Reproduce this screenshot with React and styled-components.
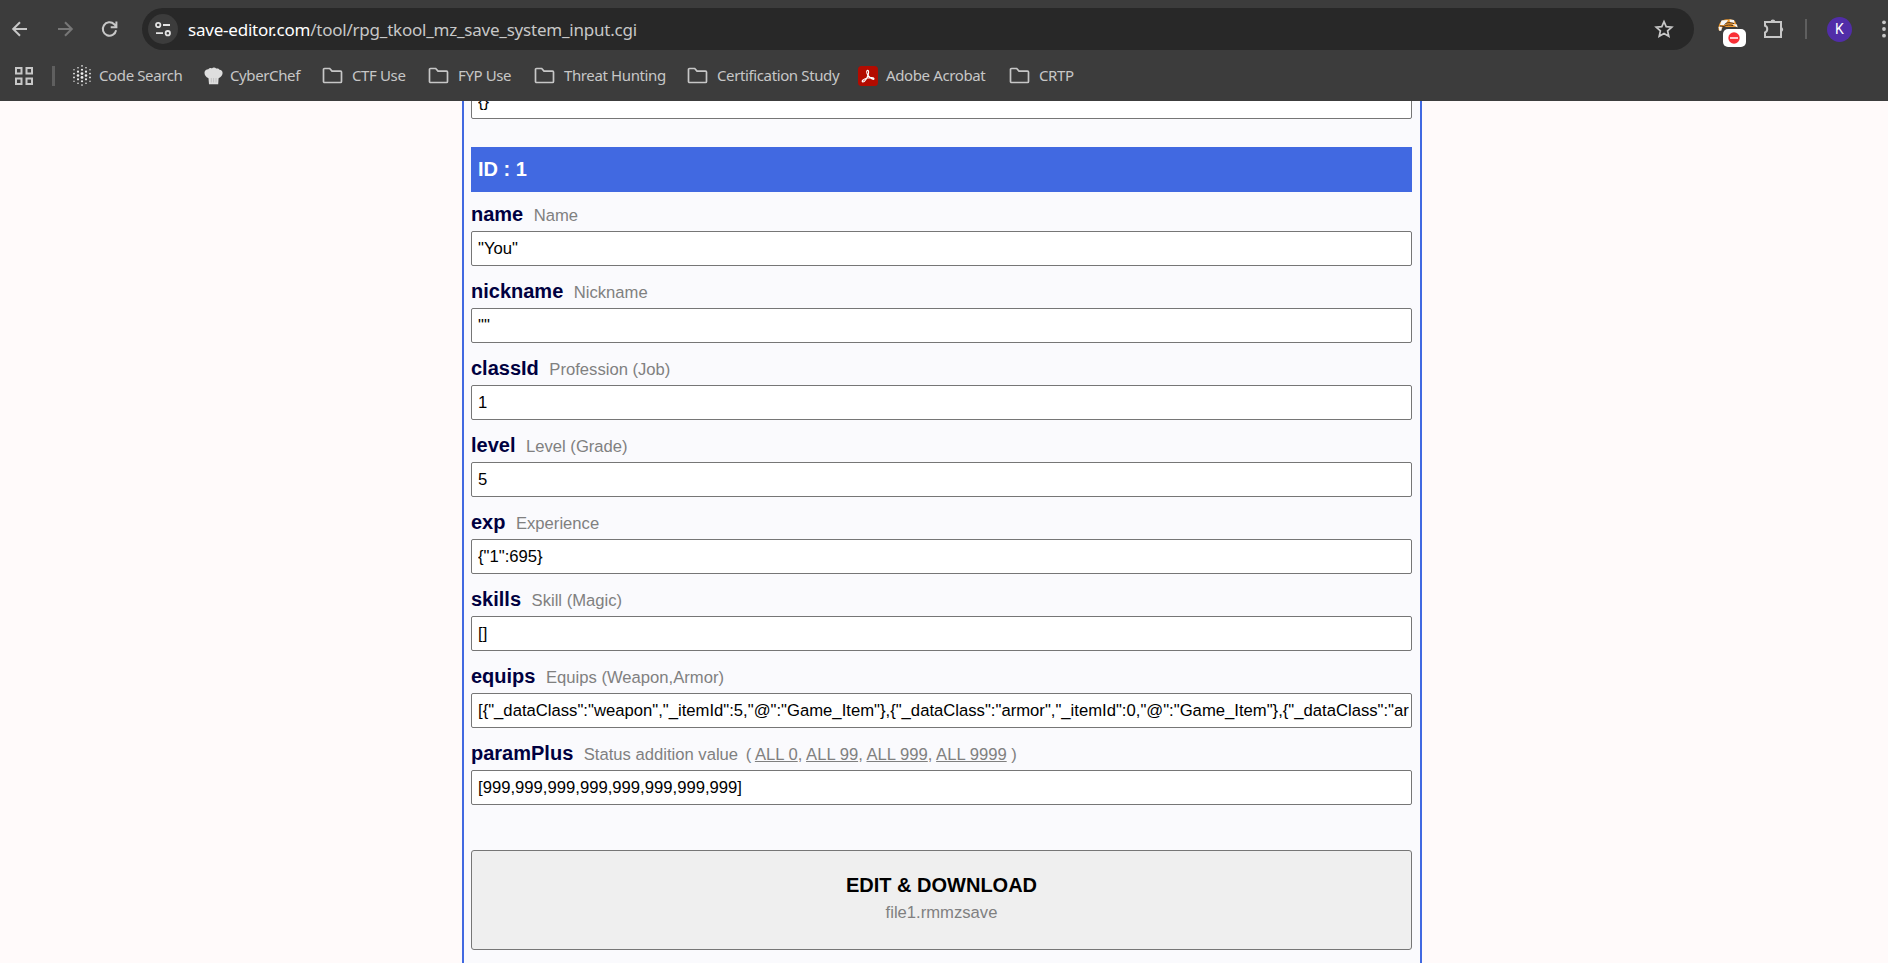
import React from "react";
import styled, { createGlobalStyle } from "styled-components";

const GlobalStyle = createGlobalStyle`
  * { box-sizing: border-box; }
  html, body { margin: 0; padding: 0; overflow: hidden; }
  body { background: #fffafa; font-family: "Liberation Sans", Arial, sans-serif; }
`;

const Window = styled.div`
  display: flex;
  flex-direction: column;
  height: 100vh;
  overflow: hidden;
`;

const Chrome = styled.header`
  flex: none;
  height: 101px;
  background: #3c3c3c;
  color: #c7c7c7;
  font-family: "Noto Sans", "Open Sans", sans-serif;
  overflow: hidden;
`;

const Toolbar = styled.div`
  display: flex;
  align-items: center;
  height: 50px;
  padding-top: 8px;
`;

const NavGroup = styled.div`
  display: flex;
  align-items: center;
  gap: 24.5px;
  width: 142px;
  padding-left: 10px;
  flex: none;
`;

const Icon = styled.svg`
  display: block;
  flex: none;
  width: ${(p) => p.$w || 20}px;
  height: ${(p) => p.$h || p.$w || 20}px;
  fill: none;
  stroke: ${(p) => p.$color || "#c7c7c7"};
  stroke-width: ${(p) => p.$stroke || 2};
`;

const AddressBar = styled.div`
  display: flex;
  align-items: center;
  flex: none;
  width: 1552px;
  height: 42px;
  padding: 0 20px 0 6px;
  border-radius: 21px;
  background: #282828;
`;

const SiteInfo = styled.div`
  display: flex;
  align-items: center;
  justify-content: center;
  width: 30px;
  height: 30px;
  border-radius: 50%;
  background: #3c3c3c;
`;

const Url = styled.div`
  flex: 1;
  display: flex;
  padding: 2px 0 0 10px;
  font-size: 17px;
  line-height: 24px;
  white-space: nowrap;
  letter-spacing: -0.22px;
`;

const Host = styled.span`
  color: #ffffff;
  letter-spacing: -0.22px;
`;

const Actions = styled.div`
  display: flex;
  align-items: center;
  flex: none;
  padding-left: 24px;
`;

const Extension = styled.div`
  position: relative;
  width: 45px;
  height: 28px;
`;

const Badge = styled.span`
  position: absolute;
  left: 5px;
  top: 14px;
  display: flex;
  align-items: center;
  justify-content: center;
  width: 23px;
  height: 18px;
  padding-right: 1px;
  border-radius: 5px;
  background: #fff;
`;

const Separator = styled.span`
  width: ${(p) => p.$w || 2}px;
  height: 20px;
  margin: ${(p) => p.$margin};
  background: #5f5f5f;
`;

const Avatar = styled.div`
  width: 25px;
  height: 25px;
  margin-right: 30px;
  border-radius: 50%;
  background: #512da8;
  color: #fff;
  font: 14px/25px Roboto, sans-serif;
  text-align: center;
`;

const Bookmarks = styled.nav`
  display: flex;
  align-items: center;
  height: 51px;
  padding-left: 15px;
`;

const Bookmark = styled.div`
  display: flex;
  align-items: center;
  gap: ${(p) => p.$gap}px;
  width: ${(p) => p.$width}px;
  flex: none;
  font-size: 15px;
  line-height: 20px;
  letter-spacing: -0.38px;
  white-space: nowrap;
`;

const BookmarkLabel = styled.span`
  padding-bottom: 2px;
`;

const Viewport = styled.div`
  flex: 1;
  min-height: 0;
  overflow: hidden;
  display: flex;
  padding-left: 462px;
`;

const Panel = styled.main`
  width: 960px;
  height: 900px;
  padding: 0 8px 0 7px;
  border: solid #4169e1;
  border-width: 0 2px;
  background: #fafafd;
`;

const TextInput = styled.input`
  display: block;
  width: 100%;
  height: 35px;
  margin: 0;
  padding: 0 2px 0 6px;
  border: 1px solid #767676;
  border-radius: 2px;
  background: #fff;
  color: #000;
  font-family: "Liberation Sans", Arial, sans-serif;
  font-size: 16.66px;
  outline: none;
`;

const PreviousField = styled.div`
  margin-top: -17px;
`;

const RecordTitle = styled.h2`
  height: 45px;
  margin: 28px 0 0;
  padding-left: 7px;
  background: #4169e1;
  color: #fff;
  font-size: 20px;
  line-height: 44px;
`;

const Field = styled.div`
  padding-top: ${(p) => (p.$first ? 7 : 10)}px;
`;

const Caption = styled.div`
  display: flex;
  align-items: baseline;
  height: 32px;
  line-height: 31px;
`;

const Key = styled.strong`
  color: #000040;
  font-size: 20px;
`;

const Hint = styled.span`
  margin-left: ${(p) => p.$gap || 10.5}px;
  color: #808080;
  font-size: 16.64px;
  white-space: pre;
`;

const Preset = styled.span`
  text-decoration: underline;
`;

const Download = styled.button`
  display: flex;
  flex-direction: column;
  align-items: center;
  justify-content: center;
  width: 100%;
  height: 100px;
  margin-top: 45px;
  padding: 0 0 2px;
  border: 1px solid #767676;
  border-radius: 3px;
  background: #efefef;
  color: #000;
  font-family: "Liberation Sans", Arial, sans-serif;
  font-size: 20px;
  font-weight: bold;
  line-height: 28px;
`;

const FileName = styled.span`
  color: #808080;
  font-size: 16.64px;
  font-weight: normal;
`;

const FolderIcon = () => (
  <Icon viewBox="0 0 21 17" $w={21} $h={17} $stroke={1.7}>
    <path d="M2.5 1.5h5.2l2.3 2.6h8.5a1 1 0 0 1 1 1v9.4a1 1 0 0 1-1 1h-16a1 1 0 0 1-1-1v-12a1 1 0 0 1 1-1z" />
  </Icon>
);

const DOT_ROWS = [
  [[9, 0.8]],
  [[5, 0.8], [13, 0.8]],
  [[1, 0.7], [9, 1.1], [17, 0.7]],
  [[5, 1.1], [13, 1.1]],
  [[1, 0.9], [9, 1.4], [17, 0.9]],
  [[5, 1.3], [13, 1.3]],
  [[1, 0.9], [9, 1.4], [17, 0.9]],
  [[5, 1.1], [13, 1.1]],
  [[1, 0.7], [9, 1.1], [17, 0.7]],
  [[5, 0.8], [13, 0.8]],
  [[9, 0.8]],
];

const DotsIcon = () => (
  <Icon viewBox="0 0 19 21" $w={19} $h={21} $color="none">
    {DOT_ROWS.flatMap((row, y) =>
      row.map(([x, r]) => <circle key={`${x}-${y}`} cx={x} cy={0.9 + y * 1.92} r={r} fill="#eee" />)
    )}
  </Icon>
);

const ChefIcon = () => (
  <Icon viewBox="0 0 19 18" $w={19} $h={18} $color="none">
    <path
      d="M4.500 11.300C1.800 10 .3 8 .5 5.500 .6 3.500 2.100 2.300 4.300 2.200 5.200 1 6.800.9 7.800 1.400 9 .3 11.200.3 12.200 1.600c1.300-.5 2.700 0 3.300 1.200 1.900.3 3.100 1.400 3.100 3.200 0 2.200-1.600 4.300-4 5.300l-.4 5.900H5z"
      fill="#dedede"
    />
    <path d="M7.300 11v4.500M9.600 11v4.500M12 11v4.500" stroke="#bdbdbd" strokeWidth=".8" />
  </Icon>
);

const AcrobatIcon = () => (
  <Icon viewBox="0 0 20 20" $w={20} $color="none">
    <rect width="20" height="20" rx="3.500" fill="#b30b00" />
    <path
      d="M9.200 4.500c1.500-.6 1.700 1.300 1 4C9.500 11.200 7 16 5 16c-2-.3 0-3 4.500-4 3-.7 6.500-.4 6.500.8 0 1.500-3-.1-5-2.300C9 8.300 8.100 5.500 9.200 4.500z"
      stroke="#fff"
      strokeWidth="1.200"
    />
  </Icon>
);

const BOOKMARKS = [
  { label: "Code Search", icon: <DotsIcon />, gap: 7, width: 131 },
  { label: "CyberChef", icon: <ChefIcon />, gap: 7, width: 118 },
  { label: "CTF Use", icon: <FolderIcon />, gap: 9, width: 106 },
  { label: "FYP Use", icon: <FolderIcon />, gap: 9, width: 106 },
  { label: "Threat Hunting", icon: <FolderIcon />, gap: 9, width: 153 },
  { label: "Certification Study", icon: <FolderIcon />, gap: 9, width: 171 },
  { label: "Adobe Acrobat", icon: <AcrobatIcon />, gap: 8, width: 151 },
  { label: "CRTP", icon: <FolderIcon />, gap: 9, width: 80 },
];

const FIELDS = [
  { name: "name", hint: "Name", value: '"You"' },
  { name: "nickname", hint: "Nickname", value: '""' },
  { name: "classId", hint: "Profession (Job)", value: "1" },
  { name: "level", hint: "Level (Grade)", value: "5" },
  { name: "exp", hint: "Experience", value: '{"1":695}' },
  { name: "skills", hint: "Skill (Magic)", value: "[]" },
  {
    name: "equips",
    hint: "Equips (Weapon,Armor)",
    value:
      '[{"_dataClass":"weapon","_itemId":5,"@":"Game_Item"},{"_dataClass":"armor","_itemId":0,"@":"Game_Item"},{"_dataClass":"armor","_itemId":0,"@":"Game_Item"}]',
  },
  {
    name: "paramPlus",
    hint: "Status addition value",
    value: "[999,999,999,999,999,999,999,999]",
    presets: ["ALL 0", "ALL 99", "ALL 999", "ALL 9999"],
  },
];

function BrowserChrome() {
  return (
    <Chrome>
      <Toolbar>
        <NavGroup>
          <Icon viewBox="0 0 20 20">
            <path d="M17 10H3.500M10 3.200 3.200 10 10 16.800" />
          </Icon>
          <Icon viewBox="0 0 20 20" $color="#777">
            <path d="M3 10h13.500M10 3.200 16.800 10 10 16.800" />
          </Icon>
          <Icon viewBox="0 0 20 20">
            <path d="M17.100 11.300A6.700 6.700 0 1 1 15.200 5.200L17.500 7.500M17.400 2.500v5.700h-5.700" />
          </Icon>
        </NavGroup>
        <AddressBar>
          <SiteInfo>
            <Icon viewBox="0 0 16 16" $w={16} $stroke={1.8} $color="#e3e3e3">
              <circle cx="3.200" cy="4" r="2.200" />
              <path d="M8 4h7M1 12.200h7" />
              <circle cx="12.800" cy="12.200" r="2.200" />
            </Icon>
          </SiteInfo>
          <Url>
            <Host>save-editor.com</Host>
            <span>/tool/rpg_tkool_mz_save_system_input.cgi</span>
          </Url>
          <Icon viewBox="0 0 20 20" $stroke={1.7}>
            <path d="m10 2.600 2.200 5.100 5.600.5-4.200 3.700 1.200 5.400-4.800-2.900-4.800 2.900 1.200-5.400-4.200-3.700 5.600-.5z" />
          </Icon>
        </AddressBar>
        <Actions>
          <Extension>
            <Icon viewBox="0 0 20 20" $color="none">
              <path d="M.5 15C0 11 1.500 7.500 4 5.500 8 3.500 15 4 17 6l2.500 6H5l-3 4z" fill="#e8962e" />
              <path d="M3.500 5.500 10 5 7 10 2 10zM11.500 4.500l4.500.5.500 3-4.500-.5zM.5 12l3.500-1-.5 4.500-2 .5zM14 9l5 .5.500 3z" fill="#f5f5f5" />
              <path d="M6.500 9.500c2.500-2.500 6-2 9.500-1M2 11l4 .5c3-2 6-1.500 9-1" stroke="#4b2b12" strokeWidth="1" />
            </Icon>
            <Badge>
              <Icon viewBox="0 0 12 12" $w={12} $color="none">
                <circle cx="6" cy="6" r="5.700" fill="#f92f36" />
                <path d="M2 6h8" stroke="#fff" strokeWidth="1.500" />
              </Icon>
            </Badge>
          </Extension>
          <Icon viewBox="0 0 22 22" $w={22}>
            <path d="M2 4h16v15H2v-4.500c3-.8 3-6 0-6.700z" />
            <path d="M7.500 4a2.400 2.400 0 0 1 4.800 0zM18 9.300a2.200 2.200 0 0 1 0 4.400z" fill="#c7c7c7" stroke="none" />
          </Icon>
          <Separator $margin="0 20px 0 20px" />
          <Avatar>K</Avatar>
          <Icon viewBox="0 0 4 20" $w={4} $h={20} $color="none">
            <circle cx="2" cy="3.300" r="1.900" fill="#c7c7c7" />
            <circle cx="2" cy="10" r="1.900" fill="#c7c7c7" />
            <circle cx="2" cy="16.700" r="1.900" fill="#c7c7c7" />
          </Icon>
        </Actions>
      </Toolbar>
      <Bookmarks>
        <Icon viewBox="0 0 18 18" $w={18} $stroke={2}>
          <path d="M1 1h5.500v5.500H1zM11.500 1H17v5.500h-5.500zM1 11.500h5.500V17H1zM11.500 11.500H17V17h-5.500z" />
        </Icon>
        <Separator $w={3} $margin="0 18px 0 19px" />
        {BOOKMARKS.map((b) => (
          <Bookmark key={b.label} $gap={b.gap} $width={b.width}>
            {b.icon}
            <BookmarkLabel>{b.label}</BookmarkLabel>
          </Bookmark>
        ))}
      </Bookmarks>
    </Chrome>
  );
}

export default function App() {
  return (
    <Window>
      <GlobalStyle />
      <BrowserChrome />
      <Viewport>
        <Panel>
          <PreviousField>
            <TextInput defaultValue="{}" />
          </PreviousField>
          <RecordTitle>ID : 1</RecordTitle>
          {FIELDS.map((f, i) => (
            <Field key={f.name} $first={i === 0}>
              <Caption>
                <Key>{f.name}</Key>
                <Hint>{f.hint}</Hint>
                {f.presets && (
                  <Hint $gap={7.5}>
                    {"( "}
                    {f.presets.map((p, n) => (
                      <React.Fragment key={p}>
                        {n > 0 && ", "}
                        <Preset>{p}</Preset>
                      </React.Fragment>
                    ))}
                    {" )"}
                  </Hint>
                )}
              </Caption>
              <TextInput defaultValue={f.value} />
            </Field>
          ))}
          <Download type="button">
            EDIT &amp; DOWNLOAD
            <FileName>file1.rmmzsave</FileName>
          </Download>
        </Panel>
      </Viewport>
    </Window>
  );
}
